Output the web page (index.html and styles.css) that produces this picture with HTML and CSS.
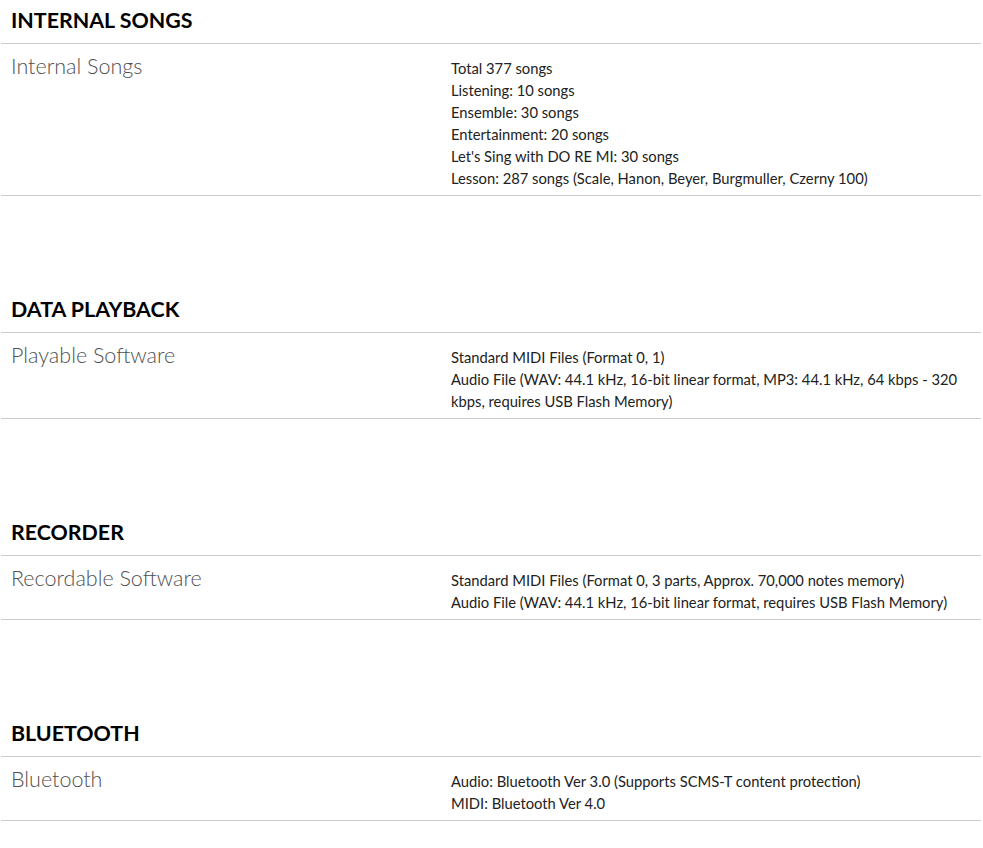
FILE: index.html
```html
<!DOCTYPE html>
<html lang="en">
<head>
<meta charset="utf-8">
<title>Specifications</title>
<link rel="stylesheet" href="styles.css">
</head>
<body>
<div class="specs">
  <section class="group">
    <h2 class="group-title">INTERNAL SONGS</h2>
    <div class="row">
      <div class="label">Internal Songs</div>
      <div class="value">
        <div>Total 377 songs</div>
        <div>Listening: 10 songs</div>
        <div>Ensemble: 30 songs</div>
        <div>Entertainment: 20 songs</div>
        <div>Let's Sing with DO RE MI: 30 songs</div>
        <div>Lesson: 287 songs (Scale, Hanon, Beyer, Burgmuller, Czerny 100)</div>
      </div>
    </div>
  </section>
  <section class="group">
    <h2 class="group-title">DATA PLAYBACK</h2>
    <div class="row">
      <div class="label">Playable Software</div>
      <div class="value">
        <div>Standard MIDI Files (Format 0, 1)</div>
        <div>Audio File (WAV: 44.1 kHz, 16-bit linear format, MP3: 44.1 kHz, 64 kbps - 320 kbps, requires USB Flash Memory)</div>
      </div>
    </div>
  </section>
  <section class="group">
    <h2 class="group-title">RECORDER</h2>
    <div class="row">
      <div class="label">Recordable Software</div>
      <div class="value">
        <div>Standard MIDI Files (Format 0, 3 parts, Approx. 70,000 notes memory)</div>
        <div>Audio File (WAV: 44.1 kHz, 16-bit linear format, requires USB Flash Memory)</div>
      </div>
    </div>
  </section>
  <section class="group">
    <h2 class="group-title">BLUETOOTH</h2>
    <div class="row">
      <div class="label">Bluetooth</div>
      <div class="value">
        <div>Audio: Bluetooth Ver 3.0 (Supports SCMS-T content protection)</div>
        <div>MIDI: Bluetooth Ver 4.0</div>
      </div>
    </div>
  </section>
</div>
</body>
</html>
```
FILE: styles.css
```css
html, body {
  margin: 0;
  padding: 0;
  background: #fff;
}
body {
  font-family: Lato, "Open Sans", Arial, sans-serif;
  color: #222;
}
.specs {
  width: 980px;
  margin-left: 1px;
  display: flex;
  flex-direction: column;
  gap: 93px;
}
.group-title {
  margin: 0;
  height: 44px;
  padding: 8px 10px 0 10px;
  box-sizing: border-box;
  font-size: 21.4px;
  line-height: 24px;
  font-weight: 700;
  color: #000;
  border-bottom: 1px solid #ccc;
}
.row {
  display: grid;
  grid-template-columns: 440px 1fr;
  padding: 13px 6px 6px 10px;
  border-bottom: 1px solid #ccc;
}
.label {
  font-size: 21.5px;
  line-height: 19px;
  font-weight: 300;
  color: #505050;
}
.value {
  font-size: 14.75px;
  line-height: 22px;
  color: #222;
}
```
